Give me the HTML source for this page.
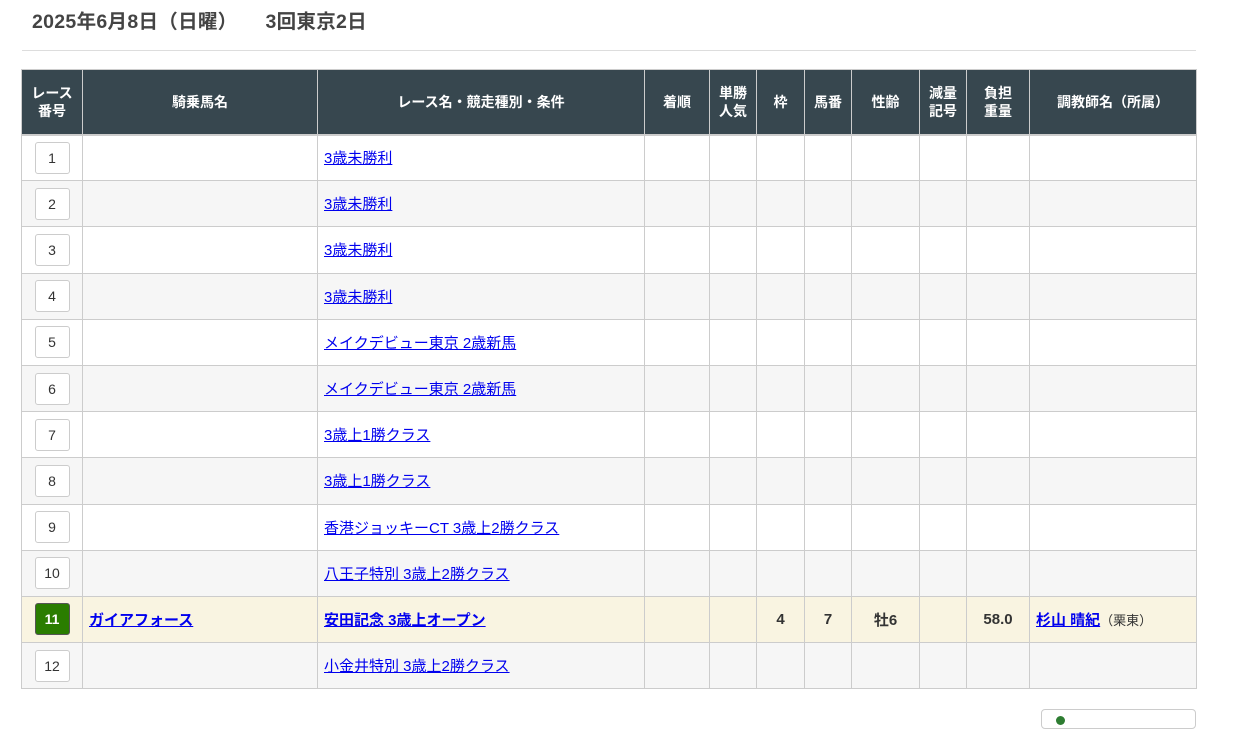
<!DOCTYPE html>
<html><head><meta charset="utf-8">
<style>
*{box-sizing:border-box;margin:0;padding:0}
body{width:1248px;height:718px;overflow:hidden;background:#fff;font-family:"Liberation Sans","Noto Sans CJK JP",sans-serif;color:#333;position:relative}
h1{position:absolute;left:32px;top:5px;font-size:19.5px;font-weight:bold;color:#444;letter-spacing:0.3px;white-space:nowrap}
.hr{position:absolute;left:22px;top:50px;width:1174px;height:1px;background:#ddd}
table{position:absolute;left:21px;top:69px;border-collapse:collapse;table-layout:fixed;width:1175px}
th{background:#37474f;color:#fff;font-size:14px;font-weight:bold;line-height:18px;height:65px;border:1px solid #ccc;border-bottom:2px solid #ccc;text-align:center}
td{height:46.2px;border:1px solid #ccc;font-size:15px;text-align:center;vertical-align:middle}
tbody tr:nth-child(odd) td{background:#fff}
tbody tr:nth-child(even) td{background:#f6f6f6}
tbody tr.hl td{background:#f9f4e1;font-weight:bold}
td.l{text-align:left;padding-left:6px}
a{color:#00e;text-decoration:underline}
.n{display:inline-block;width:35px;height:32px;line-height:30px;border:1px solid #ccc;border-radius:3px;background:#fff;font-size:14px;color:#333;font-weight:normal}
.n.g{background:#2a7d00;color:#fff;border-color:#555;font-weight:bold}
.btn{position:absolute;left:1041px;top:709px;width:155px;height:20px;border:1px solid #ccc;border-radius:4px;background:#fff}
.btn i{position:absolute;left:14px;top:6px;width:9px;height:9px;border-radius:50%;background:#2e7d32}
</style></head><body>
<h1>2025年6月8日（日曜）<span style="display:inline-block;width:28px"></span>3回東京2日</h1>
<div class="hr"></div>
<table>
<colgroup><col style="width:61px"><col style="width:235px"><col style="width:327px"><col style="width:65px"><col style="width:47px"><col style="width:48px"><col style="width:47px"><col style="width:68px"><col style="width:47px"><col style="width:63px"><col style="width:167px"></colgroup>
<thead><tr><th>レース<br>番号</th><th>騎乗馬名</th><th>レース名・競走種別・条件</th><th>着順</th><th>単勝<br>人気</th><th>枠</th><th>馬番</th><th>性齢</th><th>減量<br>記号</th><th>負担<br>重量</th><th>調教師名（所属）</th></tr></thead>
<tbody>
<tr><td><span class="n">1</span></td><td></td><td class="l"><a>3歳未勝利</a></td><td></td><td></td><td></td><td></td><td></td><td></td><td></td><td></td></tr>
<tr><td><span class="n">2</span></td><td></td><td class="l"><a>3歳未勝利</a></td><td></td><td></td><td></td><td></td><td></td><td></td><td></td><td></td></tr>
<tr><td><span class="n">3</span></td><td></td><td class="l"><a>3歳未勝利</a></td><td></td><td></td><td></td><td></td><td></td><td></td><td></td><td></td></tr>
<tr><td><span class="n">4</span></td><td></td><td class="l"><a>3歳未勝利</a></td><td></td><td></td><td></td><td></td><td></td><td></td><td></td><td></td></tr>
<tr><td><span class="n">5</span></td><td></td><td class="l"><a>メイクデビュー東京 2歳新馬</a></td><td></td><td></td><td></td><td></td><td></td><td></td><td></td><td></td></tr>
<tr><td><span class="n">6</span></td><td></td><td class="l"><a>メイクデビュー東京 2歳新馬</a></td><td></td><td></td><td></td><td></td><td></td><td></td><td></td><td></td></tr>
<tr><td><span class="n">7</span></td><td></td><td class="l"><a>3歳上1勝クラス</a></td><td></td><td></td><td></td><td></td><td></td><td></td><td></td><td></td></tr>
<tr><td><span class="n">8</span></td><td></td><td class="l"><a>3歳上1勝クラス</a></td><td></td><td></td><td></td><td></td><td></td><td></td><td></td><td></td></tr>
<tr><td><span class="n">9</span></td><td></td><td class="l"><a>香港ジョッキーCT 3歳上2勝クラス</a></td><td></td><td></td><td></td><td></td><td></td><td></td><td></td><td></td></tr>
<tr><td><span class="n">10</span></td><td></td><td class="l"><a>八王子特別 3歳上2勝クラス</a></td><td></td><td></td><td></td><td></td><td></td><td></td><td></td><td></td></tr>
<tr class="hl"><td><span class="n g">11</span></td><td class="l"><a>ガイアフォース</a></td><td class="l"><a>安田記念 3歳上オープン</a></td><td></td><td></td><td>4</td><td>7</td><td>牡6</td><td></td><td>58.0</td><td class="l"><a>杉山 晴紀</a><span style="font-weight:normal;font-size:13px">（栗東）</span></td></tr>
<tr><td><span class="n">12</span></td><td></td><td class="l"><a>小金井特別 3歳上2勝クラス</a></td><td></td><td></td><td></td><td></td><td></td><td></td><td></td><td></td></tr>
</tbody></table>
<div class="btn"><i></i></div>
</body></html>
